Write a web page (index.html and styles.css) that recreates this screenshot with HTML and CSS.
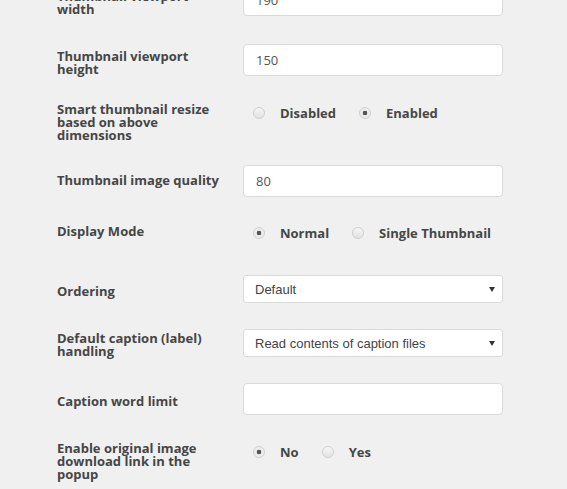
FILE: index.html
```html
<!DOCTYPE html>
<html lang="en">
<head>
<meta charset="utf-8">
<title>Gallery settings</title>
<link rel="stylesheet" href="styles.css">
</head>
<body>
<form class="settings">
  <div class="row row-vpw">
    <label class="label">Thumbnail viewport width</label>
    <div class="field"><input class="text" type="text" value="190"></div>
  </div>
  <div class="row row-vph">
    <label class="label">Thumbnail viewport height</label>
    <div class="field"><input class="text" type="text" value="150"></div>
  </div>
  <div class="row row-smart">
    <label class="label">Smart thumbnail resize based on above dimensions</label>
    <div class="field options">
      <label class="opt"><input type="radio" name="smart"><span>Disabled</span></label>
      <label class="opt"><input type="radio" name="smart" checked><span>Enabled</span></label>
    </div>
  </div>
  <div class="row row-quality">
    <label class="label">Thumbnail image quality</label>
    <div class="field"><input class="text" type="text" value="80"></div>
  </div>
  <div class="row row-mode">
    <label class="label">Display Mode</label>
    <div class="field options">
      <label class="opt"><input type="radio" name="mode" checked><span>Normal</span></label>
      <label class="opt"><input type="radio" name="mode"><span>Single Thumbnail</span></label>
    </div>
  </div>
  <div class="row row-order">
    <label class="label">Ordering</label>
    <div class="field"><span class="select-wrap"><select class="select"><option>Default</option></select></span></div>
  </div>
  <div class="row row-caption">
    <label class="label">Default caption (label) handling</label>
    <div class="field"><span class="select-wrap"><select class="select"><option>Read contents of caption files</option></select></span></div>
  </div>
  <div class="row row-limit">
    <label class="label">Caption word limit</label>
    <div class="field"><input class="text" type="text" value=""></div>
  </div>
  <div class="row row-download">
    <label class="label">Enable original image download link in the popup</label>
    <div class="field options">
      <label class="opt"><input type="radio" name="dl" checked><span>No</span></label>
      <label class="opt"><input type="radio" name="dl"><span>Yes</span></label>
    </div>
  </div>
</form>
</body>
</html>
```
FILE: styles.css
```css
html, body {
  margin: 0;
  padding: 0;
  background: #f0f0f0;
  overflow: hidden;
}
body {
  font-family: "Open Sans", "DejaVu Sans", sans-serif;
  color: #444;
  height: 489px;
}
.settings {
  margin-top: -27px;
  padding-left: 57px;
}
.row {
  display: grid;
  grid-template-columns: 186px 260px;
  align-items: start;
  box-sizing: border-box;
}
.label {
  width: 168px;
  padding-top: 17px;
  font-size: 13px;
  line-height: 13px;
  font-weight: 700;
  color: #464646;
}
.field { box-sizing: border-box; }
.text {
  display: block;
  box-sizing: border-box;
  width: 260px;
  height: 32px;
  margin: 0;
  padding: 0 12px;
  border: 1px solid #dadada;
  border-radius: 4px;
  background: #fff;
  font-family: "Open Sans", sans-serif;
  font-size: 13px;
  color: #555;
  outline: none;
}
.select-wrap {
  position: relative;
  display: block;
  width: 260px;
}
.select-wrap::after {
  content: "";
  position: absolute;
  right: 8px;
  top: 12px;
  border-left: 3px solid transparent;
  border-right: 3px solid transparent;
  border-top: 5px solid #333;
  pointer-events: none;
}
.select {
  display: block;
  box-sizing: border-box;
  width: 260px;
  height: 28px;
  margin: 0;
  padding: 0 11px;
  border: 1px solid #dadada;
  border-radius: 3px;
  background: #fff;
  -webkit-appearance: none;
  appearance: none;
  font-family: "Liberation Sans", Arial, sans-serif;
  font-size: 13px;
  color: #444;
  outline: none;
}
.options {
  display: flex;
  align-items: center;
  padding-left: 10px;
  line-height: 16px;
  white-space: nowrap;
}
.opt {
  display: flex;
  flex-shrink: 0;
  align-items: center;
  margin-right: 23px;
  font-size: 13px;
  font-weight: 700;
  color: #464646;
}
.opt input {
  -webkit-appearance: none;
  appearance: none;
  box-sizing: border-box;
  flex-shrink: 0;
  width: 12px;
  height: 12px;
  margin: 0 15px 0 0;
  border: 1px solid #cfcfcf;
  border-radius: 50%;
  background: linear-gradient(#f6f6f6, #e2e2e2);
}
.opt input:checked {
  background: radial-gradient(circle, #555 0, #555 2px, #e9e9e9 2.6px, #f3f3f3 100%);
}

.row-vpw { height: 60px; }
.row-vpw .field { padding-top: 11px; }
.row-vph { height: 53px; }
.row-vph .field { padding-top: 11px; }
.row-smart { height: 71px; }
.row-smart .field { padding-top: 19px; }
.row-quality { height: 51px; }
.row-quality .field { padding-top: 8px; }
.row-mode { height: 60px; }
.row-mode .field { padding-top: 17px; }
.row-order { height: 47px; }
.row-order .field { padding-top: 7px; }
.row-caption { height: 63px; }
.row-caption .field { padding-top: 14px; }
.row-limit { height: 47px; }
.row-limit .field { padding-top: 5px; }
.row-download { height: 64px; }
.row-download .field { padding-top: 19px; }
```
